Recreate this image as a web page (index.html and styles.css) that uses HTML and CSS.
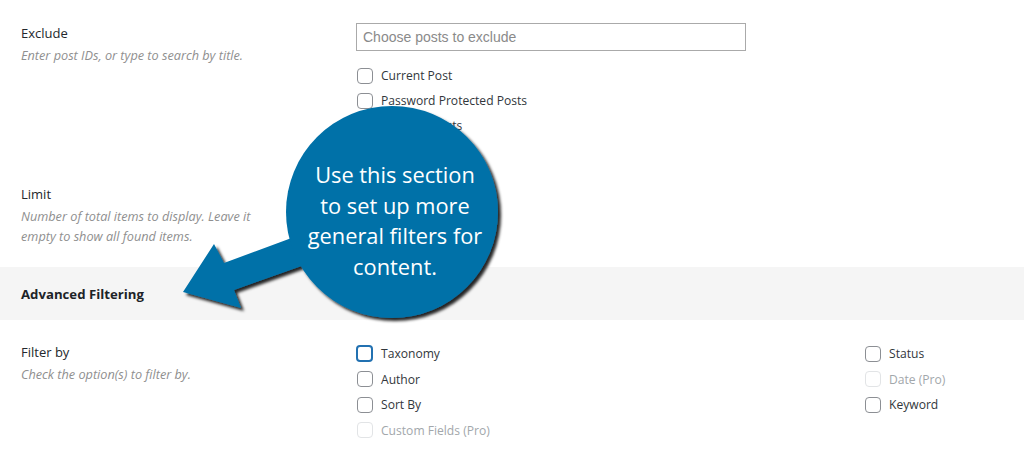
FILE: index.html
```html
<!DOCTYPE html>
<html lang="en">
<head>
<meta charset="utf-8">
<title>Settings</title>
<link rel="stylesheet" href="styles.css">
</head>
<body>
<div class="page">
  <div class="row row-exclude">
    <div class="head">
      <div class="label">Exclude</div>
      <div class="desc">Enter post IDs, or type to search by title.</div>
    </div>
    <div class="field">
      <div class="input">Choose posts to exclude</div>
      <ul class="checks">
        <li><span class="cb"></span>Current Post</li>
        <li><span class="cb"></span>Password Protected Posts</li>
        <li><span class="cb"></span>Children Posts</li>
      </ul>
    </div>
  </div>
  <div class="row row-limit">
    <div class="head">
      <div class="label">Limit</div>
      <div class="desc">Number of total items to display. Leave it empty to show all found items.</div>
    </div>
    <div class="field"></div>
  </div>
  <div class="band">Advanced Filtering</div>
  <div class="row row-filter">
    <div class="head">
      <div class="label">Filter by</div>
      <div class="desc">Check the option(s) to filter by.</div>
    </div>
    <div class="field">
      <ul class="checks grid2">
        <li><span class="cb focus"></span>Taxonomy</li>
        <li><span class="cb"></span>Status</li>
        <li><span class="cb"></span>Author</li>
        <li class="disabled"><span class="cb"></span>Date (Pro)</li>
        <li><span class="cb"></span>Sort By</li>
        <li><span class="cb"></span>Keyword</li>
        <li class="disabled"><span class="cb"></span>Custom Fields (Pro)</li>
      </ul>
    </div>
  </div>

  <div class="callout">
    <svg class="callout-shape" width="350" height="230" viewBox="0 0 350 230">
      <defs>
        <filter id="sh" x="-20%" y="-20%" width="140%" height="140%">
          <feDropShadow dx="3" dy="3" stdDeviation="1.6" flood-color="#000" flood-opacity="0.85"/>
        </filter>
      </defs>
      <g filter="url(#sh)" fill="#0071a8">
        <polygon points="13,192 44,144 54,163 135,133 140,163 64,190 71,208"/>
        <circle cx="222" cy="112" r="106"/>
      </g>
    </svg>
    <div class="callout-text">Use this section<br>to set up more<br>general filters for<br>content.</div>
  </div>
</div>
</body>
</html>
```

FILE: styles.css
```css
* { box-sizing: border-box; }
html, body { margin: 0; padding: 0; background: #fff; }
body {
  font-family: "Open Sans", "Noto Sans", sans-serif;
  font-size: 13px;
  color: #23282d;
  width: 1024px;
  height: 456px;
  overflow: hidden;
}
.page { position: relative; }
.row {
  display: grid;
  grid-template-columns: 335px 1fr;
  padding: 0 21px;
}
.label {
  font-size: 13px;
  line-height: 20px;
  color: #23282d;
}
.desc {
  font-style: italic;
  font-size: 12.7px;
  color: #8f8f8f;
  line-height: 20px;
  margin-top: 2px;
  width: 240px;
}
.row-exclude { padding-top: 23px; height: 184px; }
.input {
  width: 390px;
  height: 28px;
  border: 1px solid #aaa;
  font-family: "Liberation Sans", Arial, sans-serif;
  font-size: 14px;
  color: #8a8a8a;
  padding: 0 6px;
  line-height: 26px;
}
.checks { list-style: none; margin: 0; padding: 0; }
.row-exclude .checks { margin-top: 12px; }
.checks li {
  display: flex;
  align-items: center;
  height: 25px;
  color: #32373c;
  font-size: 12.1px;
}
.cb {
  width: 16px;
  height: 16px;
  border: 1px solid #8c8f94;
  border-radius: 4px;
  background: #fff;
  margin: 0 8px 0 1px;
  flex: none;
}
.cb.focus {
  border: 2px solid #2271b1;
  width: 17px;
  height: 17px;
  margin-left: 0;
}
.checks li.disabled { color: #a2a7ab; }
.checks li.disabled .cb { border-color: #e2e4e6; }
.row-limit { height: 83px; }
.band {
  height: 53px;
  background: #f5f5f5;
  padding: 0 21px;
  display: flex;
  align-items: center;
  font-weight: 700;
  font-size: 13.2px;
  color: #1d2327;
}
.row-filter { padding-top: 22px; }
.grid2 {
  display: grid;
  grid-template-columns: 508px 1fr;
  grid-auto-rows: 25.5px;
  margin-top: -1px;
}
.grid2 li { height: 25.5px; }

.callout {
  position: absolute;
  left: 170px;
  top: 100px;
  width: 350px;
  height: 230px;
}
.callout-shape { display: block; }
.callout-text {
  position: absolute;
  left: 115px;
  top: 60px;
  width: 220px;
  text-align: center;
  color: #fff;
  font-family: "Open Sans", "Noto Sans", sans-serif;
  font-size: 21.8px;
  line-height: 30.5px;
}
```
